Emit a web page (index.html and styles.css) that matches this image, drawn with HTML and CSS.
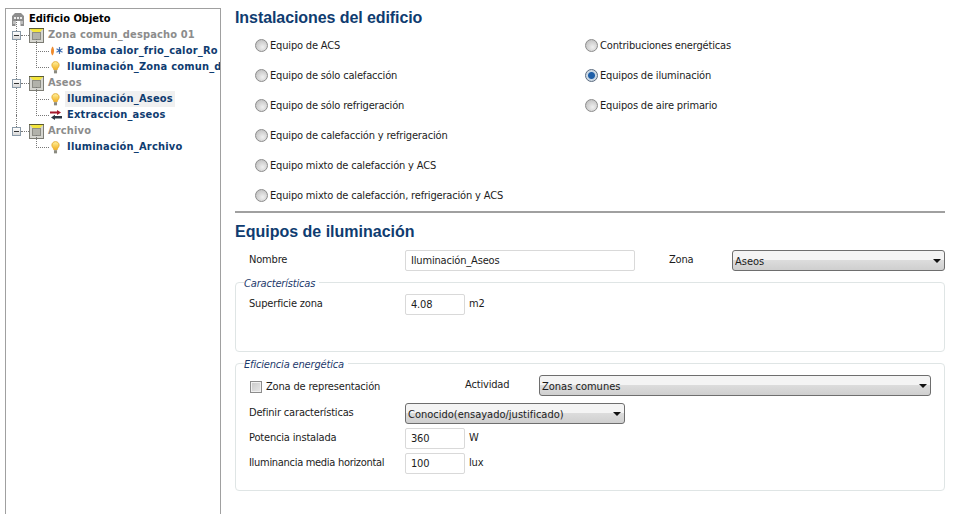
FILE: index.html
```html
<!DOCTYPE html>
<html lang="es">
<head>
<meta charset="utf-8">
<title>Equipos de iluminación</title>
<link rel="stylesheet" href="styles.css">
</head>
<body>
<svg class="defs" width="0" height="0" aria-hidden="true">
  <defs>
    <linearGradient id="bulbg" x1="0" y1="0" x2="0" y2="1"><stop offset="0" stop-color="#fff2a0"/><stop offset="1" stop-color="#f2b01e"/></linearGradient>
    <symbol id="zone" viewBox="0 0 15 15">
      <rect x="0.500" y="0.500" width="14" height="14" fill="#d6d6d0" stroke="#7c7c74"/>
      <rect x="3.500" y="4.500" width="8" height="7" fill="#b2b2aa" stroke="#8c8c84"/>
      <path d="M1 1H14L11 4H4Z" fill="#f4e53c"/>
      <path d="M0 .5H15" stroke="#5c5c30"/>
    </symbol>
    <symbol id="bulb" viewBox="0 0 10 14">
      <path d="M5 .5C2.400 .5 1 2.300 1 4.400 1 6.500 2.800 7.400 3.200 9.500H6.800C7.200 7.400 9 6.500 9 4.400 9 2.300 7.600 .5 5 .5Z" fill="url(#bulbg)" stroke="#e3a92c"/>
      <rect x="3.300" y="10" width="3.400" height="3.500" fill="#8a8a80"/>
    </symbol>
    <symbol id="fan" viewBox="0 0 14 10">
      <path d="M3.500 .5C5.500 2.500 5.500 7 3.500 9.500 1.500 8 1.500 3 3.500 .5Z" fill="#ef8a2c"/>
      <path d="M10.500 1V8M7.500 2.800L13.500 6.200M13.500 2.800L7.500 6.200" stroke="#4c78b8" stroke-width="1.200"/>
      <circle cx="10.500" cy="4.500" r="1.200" fill="#2f5fa5"/>
    </symbol>
    <symbol id="swap" viewBox="0 0 12 10">
      <path d="M0 1.500H7V0L11 2.500 7 5V3.500H0Z" fill="#a3182c"/>
      <path d="M12 6H5V4.800L1 7.400 5 10V8.500H12Z" fill="#2c3644"/>
    </symbol>
  </defs>
</svg>

<aside class="tree-panel">
  <div class="tree-root">
    <svg class="ico ico-build" viewBox="0 0 14 13"><path d="M1 13V3L4 0H10L13 3V13H9.500V8H4.500V13Z" fill="#8e8e8e"/><path d="M3 4H5V6H3ZM6 4H8V6H6ZM9 4H11V6H9ZM2.500 8H3.500V11H2.500ZM10.500 8H11.500V11H10.500Z" fill="#ececec"/></svg>
    <span class="t-root">Edificio Objeto</span>
  </div>
  <ul class="zones">
    <li class="zone">
      <div class="row"><span class="exp"></span><svg class="ico ico-zone"><use href="#zone"/></svg><span class="t-zone">Zona comun_despacho 01</span></div>
      <ul class="items">
        <li class="item"><svg class="ico ico-fan"><use href="#fan"/></svg><span class="t-item">Bomba calor_frio_calor_Ro</span></li>
        <li class="item"><svg class="ico ico-bulb"><use href="#bulb"/></svg><span class="t-item">Iluminación_Zona comun_d</span></li>
      </ul>
    </li>
    <li class="zone">
      <div class="row"><span class="exp"></span><svg class="ico ico-zone"><use href="#zone"/></svg><span class="t-zone">Aseos</span></div>
      <ul class="items">
        <li class="item"><svg class="ico ico-bulb"><use href="#bulb"/></svg><span class="t-item sel">Iluminación_Aseos</span></li>
        <li class="item"><svg class="ico ico-swap"><use href="#swap"/></svg><span class="t-item">Extraccion_aseos</span></li>
      </ul>
    </li>
    <li class="zone">
      <div class="row"><span class="exp"></span><svg class="ico ico-zone"><use href="#zone"/></svg><span class="t-zone">Archivo</span></div>
      <ul class="items">
        <li class="item"><svg class="ico ico-bulb"><use href="#bulb"/></svg><span class="t-item">Iluminación_Archivo</span></li>
      </ul>
    </li>
  </ul>
</aside>

<main class="content">
  <h1 class="title">Instalaciones del edificio</h1>
  <div class="radios">
    <div class="radio-col">
      <label class="radio"><input type="radio" name="eq"><span class="radio-text">Equipo de ACS</span></label>
      <label class="radio"><input type="radio" name="eq"><span class="radio-text">Equipo de sólo calefacción</span></label>
      <label class="radio"><input type="radio" name="eq"><span class="radio-text">Equipo de sólo refrigeración</span></label>
      <label class="radio"><input type="radio" name="eq"><span class="radio-text">Equipo de calefacción y refrigeración</span></label>
      <label class="radio"><input type="radio" name="eq"><span class="radio-text">Equipo mixto de calefacción y ACS</span></label>
      <label class="radio"><input type="radio" name="eq"><span class="radio-text">Equipo mixto de calefacción, refrigeración y ACS</span></label>
    </div>
    <div class="radio-col">
      <label class="radio"><input type="radio" name="eq"><span class="radio-text">Contribuciones energéticas</span></label>
      <label class="radio"><input type="radio" name="eq" checked><span class="radio-text">Equipos de iluminación</span></label>
      <label class="radio"><input type="radio" name="eq"><span class="radio-text">Equipos de aire primario</span></label>
    </div>
  </div>
  <hr class="sep">
  <h2 class="title title-sub">Equipos de iluminación</h2>
  <div class="name-row">
    <span class="lbl lbl-name">Nombre</span>
    <input class="field field-name" type="text" value="Iluminación_Aseos">
    <span class="lbl lbl-zona">Zona</span>
    <span class="sel-wrap sel-zona"><select class="select"><option>Aseos</option></select></span>
  </div>

  <fieldset class="group group-car">
    <legend>Características</legend>
    <div class="form-row">
      <span class="lbl lbl-col">Superficie zona</span>
      <input class="field field-num" type="text" value="4.08">
      <span class="unit">m2</span>
    </div>
  </fieldset>

  <fieldset class="group group-ef">
    <legend>Eficiencia energética</legend>
    <div class="form-row row-act">
      <label class="check lbl-col"><input type="checkbox">Zona de representación</label>
      <span class="lbl lbl-act">Actividad</span>
      <span class="sel-wrap sel-act"><select class="select"><option>Zonas comunes</option></select></span>
    </div>
    <div class="form-row row-def">
      <span class="lbl lbl-col">Definir características</span>
      <span class="sel-wrap sel-def"><select class="select"><option>Conocido(ensayado/justificado)</option></select></span>
    </div>
    <div class="form-row row-pot">
      <span class="lbl lbl-col">Potencia instalada</span>
      <input class="field field-num" type="text" value="360">
      <span class="unit">W</span>
    </div>
    <div class="form-row row-ilu">
      <span class="lbl lbl-col lbl-long">Iluminancia media horizontal</span>
      <input class="field field-num" type="text" value="100">
      <span class="unit">lux</span>
    </div>
  </fieldset>
</main>
</body>
</html>
```

FILE: styles.css
```css
* { box-sizing: border-box; }
html, body { height: 100%; }
body {
  margin: 0;
  display: flex;
  background: #fff;
  color: #1c1c1c;
  font: 11px/14px "DejaVu Sans Condensed", "DejaVu Sans", sans-serif;
  overflow: hidden;
}
.defs { display: block; width: 0; height: 0; flex: none; }

/* tree */
.tree-panel {
  flex: none;
  width: 216px;
  height: 506px;
  margin: 8px 0 0 5px;
  padding: 2px 0 0 5px;
  border: 1px solid #a0a0a0;
  border-bottom: 0;
  overflow: hidden;
  white-space: nowrap;
  font-weight: 700;
  font-size: 11px;
}
.tree-root, .row, .item { display: flex; align-items: center; height: 16px; }
ul { list-style: none; margin: 0; padding: 0; }
.ico { flex: none; display: block; }
.ico-build { width: 14px; height: 13px; margin-right: 4px; }
.t-root { color: #000; }
.zones { margin-left: 5px; }
.zone { position: relative; }
.zone::before {
  content: "";
  position: absolute;
  left: 0;
  top: -8px;
  bottom: 0;
  border-left: 1px dotted #777;
}
.zone:last-child::before { bottom: auto; height: 16px; }
.exp {
  flex: none;
  position: relative;
  width: 9px;
  height: 9px;
  margin-left: -4px;
  margin-right: 8px;
  border: 1px solid #8a9aa8;
  background: linear-gradient(#fff, #d8d8d8);
}
.exp::before {
  content: "";
  position: absolute;
  left: 1px; right: 1px; top: 3px;
  height: 1px;
  background: #333;
}
.exp::after {
  content: "";
  position: absolute;
  left: 8px;
  top: 3px;
  width: 8px;
  border-top: 1px dotted #777;
}
.ico-zone { width: 15px; height: 15px; margin-right: 4px; }
.t-zone { color: #8c8c8c; letter-spacing: .15px; }
.items { margin-left: 20px; }
.item { position: relative; }
.item::before {
  content: "";
  position: absolute;
  left: 0;
  top: -8px;
  height: 16px;
  width: 12px;
  border-left: 1px dotted #777;
  border-bottom: 1px dotted #777;
}
.item:first-child::before { top: -4px; height: 12px; }
.t-item { color: #0f3c70; padding: 0 2px; line-height: 16px; letter-spacing: .2px; }
.t-item.sel { background: #f0f0f0; }
.ico-bulb { width: 9px; height: 13px; margin: 0 5px 0 15px; }
.ico-fan { width: 14px; height: 10px; margin: 0 2px 0 13px; }
.ico-swap { width: 12px; height: 10px; margin: 0 3px 0 14px; }

/* main */
.content { flex: none; width: 710px; margin-left: 14px; letter-spacing: -.17px; }
.title {
  margin: 0;
  font: 700 16px/20px "Liberation Sans", Arial, sans-serif;
  color: #0f3c70;
  letter-spacing: 0;
}
h1.title { margin-top: 8px; letter-spacing: -.08px; }
.radios { display: flex; padding: 10px 0 0 20px; }
.radio-col { width: 330px; display: flex; flex-direction: column; gap: 16px; }
.radio { display: flex; align-items: center; gap: 2px; height: 14px; }
.radio-text { padding-top: 2px; }
.radio input {
  appearance: none;
  flex: none;
  width: 13px;
  height: 13px;
  margin: 0;
  border: 1px solid #8c8c8c;
  border-radius: 50%;
  background: radial-gradient(circle at 60% 65%, #f0f0f0, #c4c4c4 75%);
}
.radio input:checked {
  background: radial-gradient(circle, #1f5fa8 0 3px, #c9d8e6 4px, #dcdcdc 100%);
  border-color: #5c6c80;
}
.sep { margin: 9px 0 0; height: 2px; border: 0; background: #a0a0a0; }
.title-sub { margin-top: 9px; }

.lbl, .unit, .check { display: block; }
.name-row { display: flex; align-items: flex-start; height: 21px; margin-top: 8px; }
.lbl-name { width: 156px; margin: 3px 0 0 14px; }
.lbl-zona { width: 63px; margin: 3px 0 0 34px; }
.field {
  height: 21px;
  padding: 0 5px;
  border: 1px solid #d9d9d9;
  border-radius: 2px;
  background: #fff;
  font: inherit;
  letter-spacing: inherit;
  color: #1c1c1c;
  outline: 0;
}
.field-name { width: 230px; }
.field-num { flex: none; width: 60px; }
.unit { margin: 3px 0 0 4px; }
.sel-wrap { display: block; position: relative; flex: none; }
.sel-wrap::after {
  content: "";
  position: absolute;
  right: 4px;
  top: 9px;
  border: 4px solid transparent;
  border-top: 4px solid #111;
  border-bottom: 0;
}
.select {
  appearance: none;
  display: block;
  width: 100%;
  height: 21px;
  padding: 2px 14px 0 2px;
  border: 1px solid #6e6e6e;
  border-radius: 3px;
  background: linear-gradient(#f4f4f4 0 45%, #dcdcdc 50%, #cfcfcf 100%);
  font: inherit;
  letter-spacing: 0;
  color: #1c1c1c;
}
.sel-zona { width: 213px; }
.sel-act { width: 392px; }
.sel-def { width: 220px; }

.group {
  margin: 4px 0 0;
  padding: 0 0 0 13px;
  border: 1px solid #dfe5e5;
  border-radius: 4px;
  min-inline-size: 0;
}
.group legend {
  position: relative;
  top: 2px;
  margin-left: -5px;
  padding: 0 4px 0 0;
  line-height: 12px;
  font-style: italic;
  color: #1d3a6c;
}
.group-car { height: 76px; margin-top: 5px; }
.group-ef { height: 134px; margin-top: 5px; }
.form-row { display: flex; align-items: flex-start; }
.lbl-col { flex: none; width: 156px; margin-top: 3px; }
.lbl-long { letter-spacing: -.3px; }
.group-car .form-row { margin-top: 6px; }
.row-act { margin-top: 6px; height: 21px; }
.row-def { margin-top: 7px; height: 21px; }
.row-pot { margin-top: 4px; height: 21px; }
.row-ilu { margin-top: 4px; height: 21px; }
.check { display: flex; align-items: center; gap: 4px; margin-top: 5px; padding-left: 1px; }
.check input {
  appearance: none;
  flex: none;
  width: 12px;
  height: 12px;
  margin: 0;
  border: 1px solid #8c8c8c;
  background: linear-gradient(135deg, #c8c8c8, #e8e8e8);
  box-shadow: inset 0 0 0 1px #f0f0f0;
}
.lbl-act { width: 74px; margin: 3px 0 0 60px; }
```
